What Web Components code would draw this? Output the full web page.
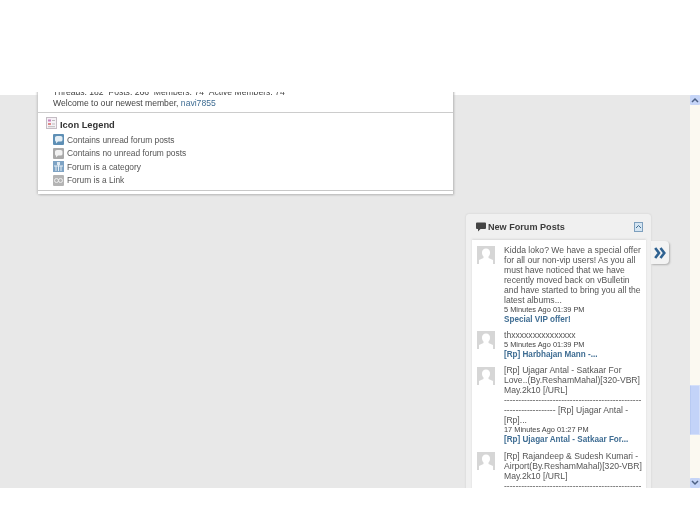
<!DOCTYPE html>
<html>
<head>
<meta charset="utf-8">
<title>Forum</title>
<style>
  html, body { margin: 0; height: 100%; background: #fff; overflow: hidden; }
  body { font-family: "Liberation Sans", Arial, sans-serif; color: #444; }
</style>
</head>
<body>
<forum-page>
  <stats-panel slot="left">
    <legend-row icon="unread">Contains unread forum posts</legend-row>
    <legend-row icon="read">Contains no unread forum posts</legend-row>
    <legend-row icon="category">Forum is a category</legend-row>
    <legend-row icon="link">Forum is a Link</legend-row>
  </stats-panel>
  <posts-panel slot="right">
    <post-item time="5 Minutes Ago 01:39 PM" title="Special VIP offer!">Kidda loko? We have a special offer<br>for all our non-vip users! As you all<br>must have noticed that we have<br>recently moved back on vBulletin<br>and have started to bring you all the<br>latest albums...</post-item>
    <post-item time="5 Minutes Ago 01:39 PM" title="[Rp] Harbhajan Mann -...">thxxxxxxxxxxxxxxx</post-item>
    <post-item time="17 Minutes Ago 01:27 PM" title="[Rp] Ujagar Antal - Satkaar For...">[Rp] Ujagar Antal - Satkaar For<br>Love..(By.ReshamMahal)[320-VBR]<br>May.2k10 [/URL]<br>------------------------------------------------<br>------------------ [Rp] Ujagar Antal -<br>[Rp]...</post-item>
    <post-item>[Rp] Rajandeep &amp; Sudesh Kumari -<br>Airport(By.ReshamMahal)[320-VBR]<br>May.2k10 [/URL]<br>------------------------------------------------</post-item>
  </posts-panel>
</forum-page>

<script>
class ForumPage extends HTMLElement {
  constructor() {
    super();
    this.attachShadow({ mode: 'open' });
    this.shadowRoot.innerHTML = `
      <style>
        :host { display: flex; flex-direction: column; height: 525px; background: #fff; }
        .top { height: 92px; flex: none; background: #fff; }
        /* the grey only starts at 95, the panel text already shows from 92 */
        .view { height: 396px; flex: none; display: flex; background: linear-gradient(#fff 3px, #e8e8e8 3px); overflow: hidden; }
        .content { flex: 1; min-width: 0; display: flex; flex-direction: column; padding-left: 38px; filter: blur(0.35px); }
        .right { align-self: flex-start; margin: 20px 0 0 428px; display: flex; align-items: flex-start; }
        .bottom { flex: 1; background: #fff; }
      </style>
      <div class="top"></div>
      <div class="view">
        <div class="content">
          <slot name="left"></slot>
          <div class="right"><slot name="right"></slot><panel-toggle></panel-toggle></div>
        </div>
        <page-scrollbar></page-scrollbar>
      </div>
      <div class="bottom"></div>
    `;
  }
}
customElements.define('forum-page', ForumPage);

class StatsPanel extends HTMLElement {
  constructor() {
    super();
    this.attachShadow({ mode: 'open' });
    this.shadowRoot.innerHTML = `
      <style>
        :host { display: block; width: 415px; margin-top: -6px; background: #fff; box-sizing: border-box;
          box-shadow: -1px 0 2px #c4c4c4, 1px 1px 2px #b4b4b4; font-size: 8.6px; color: #444; }
        .stats { padding: 0 0 0 15px; height: 27px; border-bottom: 1px solid #ccc; line-height: 10px; box-sizing: border-box; white-space: nowrap; }
        .stats div { padding-top: 1px; height: 10px; }
        a { color: #3f6d93; }
        .head { display: flex; align-items: center; height: 15px; padding: 4px 0 0 8px; font-weight: bold; font-size: 9.3px; color: #333; }
        .head svg { margin: -4px 3px 0 0; }
        .rows { padding: 1px 0 0 15px; }
        .end { height: 2px; margin-top: 1px; border-bottom: 1px solid #c8c8c8; }
        .foot { height: 3px; }
      </style>
      <div class="stats">
        <div>Threads: 182 &nbsp;Posts: 266 &nbsp;Members: 74 &nbsp;Active Members: 74</div>
        <div>Welcome to our newest member, <a>navi7855</a></div>
      </div>
      <div class="head">
        <svg width="11" height="12" viewBox="0 0 11 12">
          <rect x="0.5" y="0.5" width="10" height="11" fill="#f6f2f6" stroke="#c4bcc4"/>
          <rect x="2" y="2.5" width="3" height="2" fill="#c77fc0"/>
          <rect x="2" y="6" width="3" height="2" fill="#d88"/>
          <path d="M6 3.5h3M6 7h3M2 9.7h7" stroke="#bbb"/>
        </svg>
        Icon Legend
      </div>
      <div class="rows"><slot></slot></div>
      <div class="end"></div>
      <div class="foot"></div>
    `;
  }
}
customElements.define('stats-panel', StatsPanel);

const LEGEND_ICONS = {
  unread: `<rect width="11" height="11" rx="1" fill="#5e8fb5"/><path d="M2 3.5Q2 2 4 2h3.500Q9.500 2 9.500 3.500v2.500Q9.500 7.500 7.500 7.500H5L3 9.500V7.500Q2 7.500 2 6Z" fill="#e4eef5"/>`,
  read: `<rect width="11" height="11" rx="1" fill="#a9a9a9"/><path d="M2 3.500Q2 2 4 2h3.500Q9.500 2 9.500 3.500v2.500Q9.500 7.500 7.500 7.500H5L3 9.500V7.500Q2 7.500 2 6Z" fill="#f2f2f2"/>`,
  category: `<rect width="11" height="11" fill="#7ea3c4"/><path d="M1 5h9M3 5v5M5.500 2v8M8 5v5" stroke="#e6eff6"/><rect x="4" y="1" width="3" height="3" fill="#dfeaf3"/>`,
  link: `<rect width="11" height="11" rx="1" fill="#b4b4b4"/><circle cx="3.500" cy="5.500" r="2" fill="none" stroke="#eee"/><circle cx="7.500" cy="5.500" r="2" fill="none" stroke="#eee"/>`
};

class LegendRow extends HTMLElement {
  constructor() {
    super();
    this.attachShadow({ mode: 'open' });
  }
  connectedCallback() {
    this.shadowRoot.innerHTML = `
      <style>
        :host { display: flex; align-items: center; height: 13.5px; gap: 3px; font-size: 8.4px; color: #555; white-space: nowrap; }
      </style>
      <svg width="11" height="11" viewBox="0 0 11 11">${LEGEND_ICONS[this.getAttribute('icon')]}</svg>
      <span><slot></slot></span>
    `;
  }
}
customElements.define('legend-row', LegendRow);

class PostsPanel extends HTMLElement {
  constructor() {
    super();
    this.attachShadow({ mode: 'open' });
    this.shadowRoot.innerHTML = `
      <style>
        :host { display: block; width: 185px; box-sizing: border-box; padding: 0 5px 5px 6px; background: #f0f0f0;
          border-radius: 3px 3px 0 0; box-shadow: 0 0 2px #c8c8c8; }
        .head { display: flex; align-items: center; height: 26px; padding: 0 3px 0 4px; font-size: 9.1px; font-weight: bold; color: #3c3c3c; }
        .head span { flex: 1; padding-left: 2px; }
        .body { background: #fff; padding: 4.5px 5px 0 5px; box-shadow: 0 -1px 2px #d8d8d8; }
      </style>
      <div class="head">
        <svg width="10" height="10" viewBox="0 0 10 10"><path d="M1 0.500h8a1 1 0 0 1 1 1v4.500a1 1 0 0 1-1 1H4.500L2 9.500V7H1a1 1 0 0 1-1-1V1.500a1 1 0 0 1 1-1Z" fill="#444"/></svg>
        <span>New Forum Posts</span>
        <svg width="9" height="10" viewBox="0 0 9 10"><rect x="0.500" y="0.500" width="8" height="9" fill="#d5e5f2" stroke="#7d9fbd"/><path d="M2 6l2.500-2.500L7 6" fill="none" stroke="#3f6d93"/></svg>
      </div>
      <div class="body"><slot></slot></div>
    `;
  }
}
customElements.define('posts-panel', PostsPanel);

class PostItem extends HTMLElement {
  constructor() {
    super();
    this.attachShadow({ mode: 'open' });
  }
  connectedCallback() {
    const time = this.getAttribute('time');
    const title = this.getAttribute('title');
    this.shadowRoot.innerHTML = `
      <style>
        :host { display: flex; gap: 9px; margin-bottom: 6.4px; font-size: 8.6px; line-height: 10px; color: #555; white-space: nowrap; }
        .avatar { flex: none; width: 18px; height: 18px; margin-top: 1.5px; }
        .text { flex: 1; min-width: 0; }
        .time { font-size: 7.4px; color: #444; line-height: 10px; }
        .title { font-size: 8.15px; font-weight: bold; color: #3f6d93; line-height: 9px; }
      </style>
      <svg class="avatar" viewBox="0 0 18 18">
        <rect width="18" height="18" fill="#d6d6d6"/>
        <path d="M9 2.500a4 4 0 0 1 4 4.500c0 2-1 3-1.500 3.500v1.500l4.500 2v4H2v-4l4.500-2v-1.500C6 10 5 9 5 7A4 4 0 0 1 9 2.500Z" fill="#fff"/>
      </svg>
      <div class="text">
        <div><slot></slot></div>
        ${time ? `<div class="time">${time}</div>` : ''}
        ${title ? `<div class="title">${title}</div>` : ''}
      </div>
    `;
  }
}
customElements.define('post-item', PostItem);

class PanelToggle extends HTMLElement {
  constructor() {
    super();
    this.attachShadow({ mode: 'open' });
    this.shadowRoot.innerHTML = `
      <style>
        :host { display: flex; align-items: center; justify-content: center; width: 18px; height: 23px; margin-top: 27px;
          background: #f3f3f3; border-radius: 0 4px 4px 0; box-shadow: 1px 1px 2px #b0b0b0; }
      </style>
      <svg width="12" height="12" viewBox="0 0 12 12"><path d="M1.200 1l3.800 5-3.800 5M6.500 1l3.800 5-3.800 5" fill="none" stroke="#2f6291" stroke-width="2.600"/></svg>
    `;
  }
}
customElements.define('panel-toggle', PanelToggle);

class PageScrollbar extends HTMLElement {
  constructor() {
    super();
    this.attachShadow({ mode: 'open' });
    this.shadowRoot.innerHTML = `
      <style>
        :host { display: flex; flex-direction: column; flex: none; width: 10px; margin-top: 3px; background: #fbf9f1; }
        .btn { height: 10px; flex: none; background: #c6d5f7; border-radius: 1px; display: flex; align-items: center; justify-content: center; }
        .track { flex: 1; padding-top: 280px; }
        .thumb { height: 50px; background: #c3d3f8; border: 1px solid #d5e0f9; border-left-color: #b8caf2; box-sizing: border-box; border-radius: 1px; }
      </style>
      <div class="btn"><svg width="8" height="6" viewBox="0 0 8 6"><path d="M1 5l3-3 3 3" fill="none" stroke="#4d6185" stroke-width="1.500"/></svg></div>
      <div class="track"><div class="thumb"></div></div>
      <div class="btn"><svg width="8" height="6" viewBox="0 0 8 6"><path d="M1 1l3 3 3-3" fill="none" stroke="#4d6185" stroke-width="1.500"/></svg></div>
    `;
  }
}
customElements.define('page-scrollbar', PageScrollbar);
</script>
</body>
</html>
